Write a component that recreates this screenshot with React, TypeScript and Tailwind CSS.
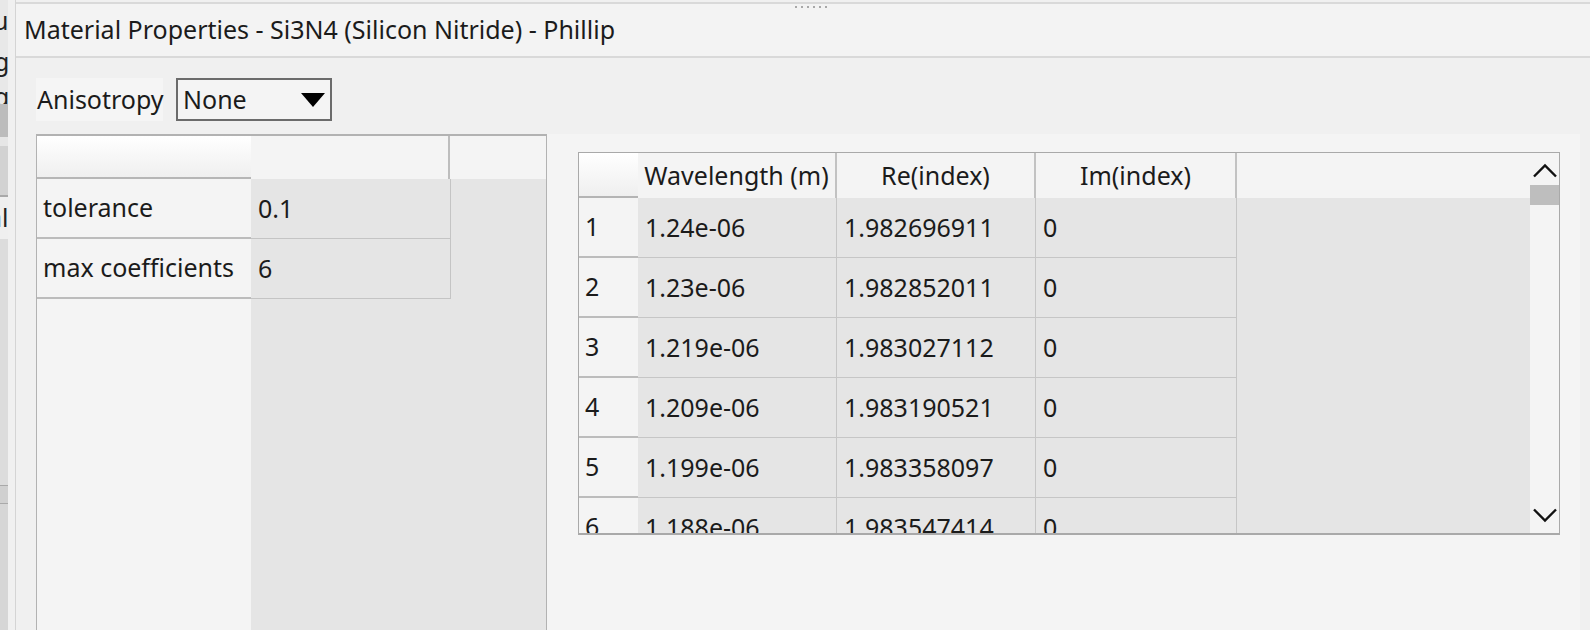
const rows = [
  { n: "1", wl: "1.24e-06", re: "1.982696911", im: "0" },
  { n: "2", wl: "1.23e-06", re: "1.982852011", im: "0" },
  { n: "3", wl: "1.219e-06", re: "1.983027112", im: "0" },
  { n: "4", wl: "1.209e-06", re: "1.983190521", im: "0" },
  { n: "5", wl: "1.199e-06", re: "1.983358097", im: "0" },
  { n: "6", wl: "1.188e-06", re: "1.983547414", im: "0" },
]

const params = [
  { name: "tolerance", value: "0.1" },
  { name: "max coefficients", value: "6" },
]

function BackWindow() {
  // edge of the window lying behind this one
  return (
    <div className="flex h-full w-[15px] shrink-0">
      <div className="flex w-[8px] flex-col overflow-hidden bg-[#e8e8e8] text-[25px] leading-none text-[#222]">
        <div className="flex h-[104px] flex-col">
          <span className="-ml-[7px] mt-[8px]">u</span>
          <span className="-ml-[6px] mt-[16px]">g</span>
          <span className="-ml-[6px] mt-[10px]">g</span>
        </div>
        <div className="h-[33px] bg-[#bcbcbc]" />
        <div className="h-[9px] bg-[#e6e6e6]" />
        <div className="h-[51px] border-b-2 border-[#a9a9a9] bg-[#d2d2d2]" />
        <div className="h-[42px] bg-[#efefef]">
          <span className="-ml-[12px] mt-[8px] block">al</span>
        </div>
        <div className="h-[246px] bg-[#dcdcdc]" />
        <div className="h-[19px] border-y border-[#a9a9a9] bg-[#d0d0d0]" />
        <div className="flex-1 bg-[#d6d6d6]" />
      </div>
      <div className="w-[7px] bg-[#f0f0f0]" />
    </div>
  )
}

function ParamTable() {
  return (
    <div className="flex h-[520px] w-[511px] shrink-0 border-x border-t-2 border-[#b2b2b2] bg-[#e5e5e5]">
      <div className="flex w-[214px] flex-col bg-[#f4f4f4]">
        <div className="h-[43px] border-b-2 border-[#b6b6b6] bg-gradient-to-b from-[#ffffff] to-[#efefef]" />
        {params.map((p) => (
          <div key={p.name} className="flex h-[60px] items-center border-b-2 border-[#bcbcbc] pl-[6px]">
            {p.name}
          </div>
        ))}
      </div>
      <div className="flex flex-1 flex-col">
        <div className="flex h-[43px]">
          <div className="w-[199px] border-r-2 border-[#bdbdbd] bg-[#f4f4f4]" />
          <div className="flex-1 bg-[#f4f4f4]" />
        </div>
        <div className="w-[200px] border-r border-[#c4c4c4]">
          {params.map((p) => (
            <div key={p.name} className="flex h-[60px] items-center border-b border-[#c4c4c4] pl-[7px]">
              {p.value}
            </div>
          ))}
        </div>
      </div>
    </div>
  )
}

function DataTable() {
  const head = "flex items-center justify-center border-r-2 border-[#c2c2c2] bg-[#f4f4f4]"
  const cell = "flex items-center border-b border-r border-[#c6c6c6] pl-[7px]"
  return (
    <div className="flex h-[383px] w-[982px] border border-b-2 border-[#a9a9a9] bg-[#e5e5e5]">
      <div className="flex flex-1 flex-col overflow-hidden">
        <div className="flex h-[45px] shrink-0">
          <div className="w-[59px] border-b-2 border-[#b4b4b4] bg-gradient-to-b from-[#ffffff] to-[#efefef]" />
          <div className={`${head} w-[199px]`}>Wavelength (m)</div>
          <div className={`${head} w-[199px]`}>Re(index)</div>
          <div className={`${head} w-[201px]`}>Im(index)</div>
          <div className="flex-1 bg-[#f4f4f4]" />
        </div>
        {rows.map((r) => (
          <div key={r.n} className="flex h-[60px] shrink-0">
            <div className="flex w-[59px] items-center border-b-2 border-[#bcbcbc] bg-[#f4f4f4] pl-[6px]">{r.n}</div>
            <div className={`${cell} w-[199px]`}>{r.wl}</div>
            <div className={`${cell} w-[199px] pl-[6px]`}>{r.re}</div>
            <div className={`${cell} w-[201px]`}>{r.im}</div>
            <div className="flex-1" />
          </div>
        ))}
      </div>
      <div className="flex w-[29px] flex-col bg-[#f4f4f4]">
        <div className="flex h-[32px] items-center justify-center pt-[2px]">
          <svg width="26" height="15" viewBox="0 0 26 15">
            <polyline points="2,13.5 13,2.5 24,13.5" fill="none" stroke="#111" strokeWidth="2.4" />
          </svg>
        </div>
        <div className="h-[20px] bg-[#bebebe]" />
        <div className="flex-1" />
        <div className="flex h-[28px] items-start justify-center pt-[3px]">
          <svg width="26" height="15" viewBox="0 0 26 15">
            <polyline points="2,1.5 13,12.5 24,1.5" fill="none" stroke="#111" strokeWidth="2.4" />
          </svg>
        </div>
      </div>
    </div>
  )
}

export default function App() {
  return (
    <div className="flex h-[630px] w-[1590px] overflow-hidden bg-[#f0f0f0] font-['Noto_Sans',sans-serif] text-[25px] text-[#1b1b1b]">
      <BackWindow />
      <div className="flex flex-1 flex-col border-l border-[#d4d4d4]">
        <div className="h-[2px] shrink-0" />
        <div className="relative flex h-[56px] shrink-0 items-center border-y-2 border-[#d9d9d9] bg-[#f3f3f3] pl-[8px]">
          <div className="absolute left-[779px] top-[2px] flex gap-[4px]">
            {[0, 1, 2, 3, 4, 5].map((i) => (
              <span key={i} className="h-[2px] w-[2px] bg-[#a8a8a8]" />
            ))}
          </div>
          <span className="pb-[1px]">Material Properties - Si3N4 (Silicon Nitride) - Phillip</span>
        </div>
        <div className="flex flex-1 flex-col pl-[20px] pt-[20px]">
          <div className="flex h-[43px] shrink-0 items-center gap-[13px]">
            <div className="flex h-full w-[127px] items-center bg-[#f5f5f5] px-[1px]">Anisotropy</div>
            <div className="flex h-full w-[156px] items-center justify-between border-2 border-[#6b6b6b] bg-[#f4f4f4] pl-[5px] pr-[5px]">
              <span>None</span>
              <svg width="24" height="14" viewBox="0 0 24 14">
                <path d="M0 0 H24 L12 14 Z" fill="#000" />
              </svg>
            </div>
          </div>
          <div className="mt-[13px] flex flex-1">
            <ParamTable />
            <div className="mr-[10px] flex-1 bg-[#f4f4f4] pl-[31px] pt-[18px]">
              <DataTable />
            </div>
          </div>
        </div>
      </div>
    </div>
  )
}
